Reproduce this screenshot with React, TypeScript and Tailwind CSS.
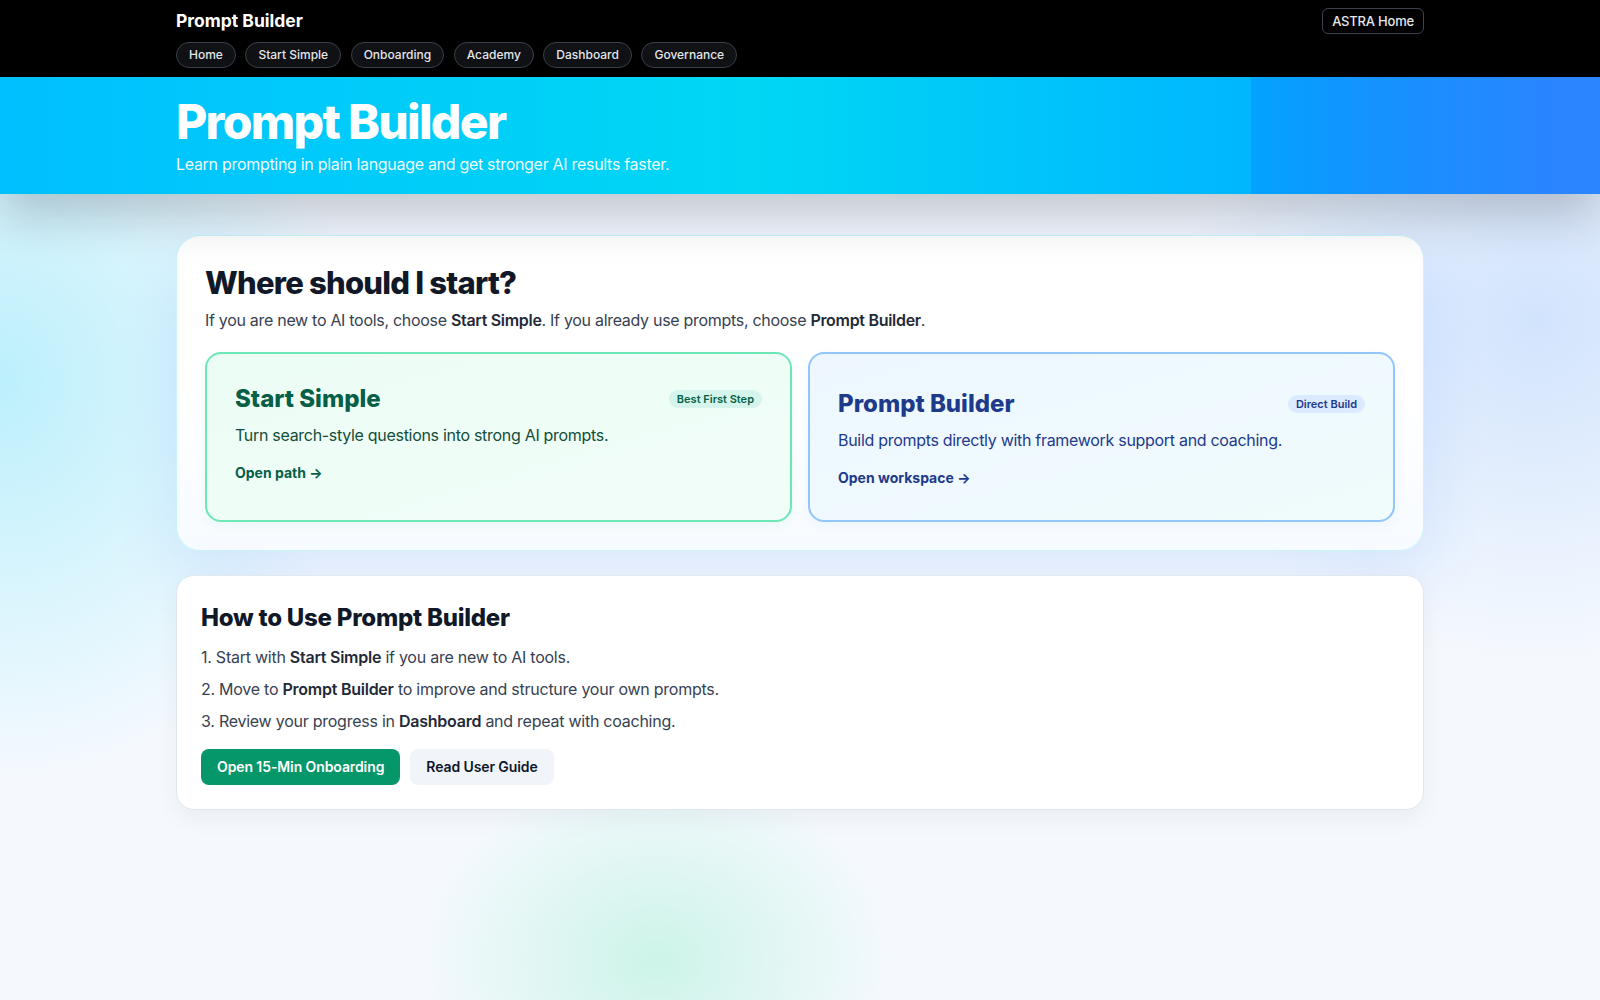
import React from "react";

const navItems = ["Home", "Start Simple", "Onboarding", "Academy", "Dashboard", "Governance"];

export default function App() {
  return (
    <div
      className="min-h-screen w-full bg-[#f5f9fe] bg-[radial-gradient(480px_540px_at_0%_38%,rgba(125,230,250,0.48),transparent_75%),radial-gradient(480px_460px_at_96%_32%,rgba(147,190,250,0.36),transparent_75%),radial-gradient(320px_260px_at_41%_96%,rgba(110,231,183,0.3),transparent_75%)] text-[#111827]"
      style={{ fontFamily: "Inter, 'Noto Sans', sans-serif" }}
    >
      {/* Top nav */}
      <header className="bg-black">
        <div className="mx-auto max-w-7xl px-4 pt-[7px] pb-[9px] flex items-start justify-between">
          <div>
            <div className="text-[17.5px] leading-7 font-bold text-white">Prompt Builder</div>
            <nav className="mt-[7px] flex gap-[9.5px]">
              {navItems.map((n) => (
                <span
                  key={n}
                  className="rounded-full border border-[#3a404b] bg-[#101216] px-3 py-[3px] text-xs leading-[18px] font-medium text-[#e5e7eb]"
                >
                  {n}
                </span>
              ))}
            </nav>
          </div>
          <span className="mt-[1px] rounded-md border border-[#3d434e] px-[9px] py-[3px] text-[13px] leading-[18px] font-medium tracking-[-0.2px] text-[#e5e7eb]">
            ASTRA Home
          </span>
        </div>
      </header>

      {/* Hero */}
      <section className="relative z-10 bg-[linear-gradient(90deg,#00c0ff_0%,#00d7f4_47%,#00b6ff_78.2%,#03a3ff_78.2%,#1592ff_86%,#2a85ff_97%)] shadow-[0_22px_48px_rgba(15,23,42,0.22)]">
        <div className="mx-auto max-w-7xl px-4 pt-[21px] pb-[18px]">
          <h1 className="text-5xl leading-none font-extrabold tracking-[-0.035em] text-white">Prompt Builder</h1>
          <p className="mt-[6px] text-base leading-6 tracking-[-0.3px] text-white/95">
            Learn prompting in plain language and get stronger AI results faster.
          </p>
        </div>
      </section>

      <main className="mx-auto max-w-7xl px-4 pt-[41px] pb-16">
        {/* Card 1 */}
        <section className="rounded-3xl border border-[#c9f4fb] bg-gradient-to-b from-white via-white to-[#f7fbff] px-7 pt-[27px] pb-7 shadow-[0_24px_60px_rgba(59,130,246,0.14)]">
          <h2 className="text-[31px] leading-10 font-extrabold tracking-tight text-[#111827]">Where should I start?</h2>
          <p className="mt-[5px] text-base leading-6 tracking-[-0.3px] text-[#374151]">
            If you are new to AI tools, choose <strong className="font-semibold text-[#1f2937]">Start Simple</strong>. If you
            already use prompts, choose <strong className="font-semibold text-[#1f2937]">Prompt Builder</strong>.
          </p>
          <div className="mt-5 grid grid-cols-2 gap-4">
            <div className="h-[170px] rounded-2xl border-2 border-[#6ee7b7] bg-gradient-to-br from-[#ecfdf5] to-[#f2fdf9] px-7 pt-[29px] shadow-[0_4px_12px_rgba(16,185,129,0.06)]">
              <div className="flex items-center justify-between">
                <h3 className="text-2xl leading-8 font-extrabold text-[#065f46]">Start Simple</h3>
                <span className="rounded-full bg-[#d5f5ec] px-2 py-[2px] text-[11px] leading-[14px] font-semibold text-[#065f46]">
                  Best First Step
                </span>
              </div>
              <p className="mt-2 text-base leading-6 tracking-[-0.3px] text-[#134e3a]">Turn search-style questions into strong AI prompts.</p>
              <div className="mt-4 text-sm leading-5 font-bold text-[#065f46]">Open path →</div>
            </div>
            <div className="h-[170px] rounded-2xl border-2 border-[#93c5fd] bg-gradient-to-br from-[#eef7ff] via-[#eff9ff] to-[#f0fbfb] px-7 pt-[34px] shadow-[0_4px_12px_rgba(59,130,246,0.06)]">
              <div className="flex items-center justify-between">
                <h3 className="text-2xl leading-8 font-extrabold text-[#1e3a8a]">Prompt Builder</h3>
                <span className="rounded-full bg-[#dbeafe] px-2 py-[2px] text-[11px] leading-[14px] font-semibold text-[#1e3a8a]">
                  Direct Build
                </span>
              </div>
              <p className="mt-2 text-base leading-6 tracking-[-0.3px] text-[#1e3a8a]">Build prompts directly with framework support and coaching.</p>
              <div className="mt-4 text-sm leading-5 font-bold text-[#1e3a8a]">Open workspace →</div>
            </div>
          </div>
        </section>

        {/* Card 2 */}
        <section className="mt-6 rounded-[18px] border border-[#e2e8f0] bg-white px-6 pt-[26px] pb-6 shadow-[0_8px_24px_rgba(15,23,42,0.05)]">
          <h2 className="text-2xl leading-8 font-extrabold tracking-[-0.01em] text-[#111827]">How to Use Prompt Builder</h2>
          <ol className="mt-[11px] space-y-2 text-base leading-6 tracking-[-0.25px] text-[#374151]">
            <li>
              1. Start with <strong className="font-semibold text-[#1f2937]">Start Simple</strong> if you are new to AI tools.
            </li>
            <li>
              2. Move to <strong className="font-semibold text-[#1f2937]">Prompt Builder</strong> to improve and structure your own
              prompts.
            </li>
            <li>
              3. Review your progress in <strong className="font-semibold text-[#1f2937]">Dashboard</strong> and repeat with coaching.
            </li>
          </ol>
          <div className="mt-4 flex gap-[10px]">
            <button className="h-9 rounded-lg bg-[#059669] px-4 text-sm font-semibold tracking-[-0.1px] text-white">Open 15-Min Onboarding</button>
            <button className="h-9 rounded-lg bg-[#f1f5f9] px-4 text-sm font-semibold tracking-[-0.1px] text-[#0f172a]">Read User Guide</button>
          </div>
        </section>
      </main>
    </div>
  );
}
